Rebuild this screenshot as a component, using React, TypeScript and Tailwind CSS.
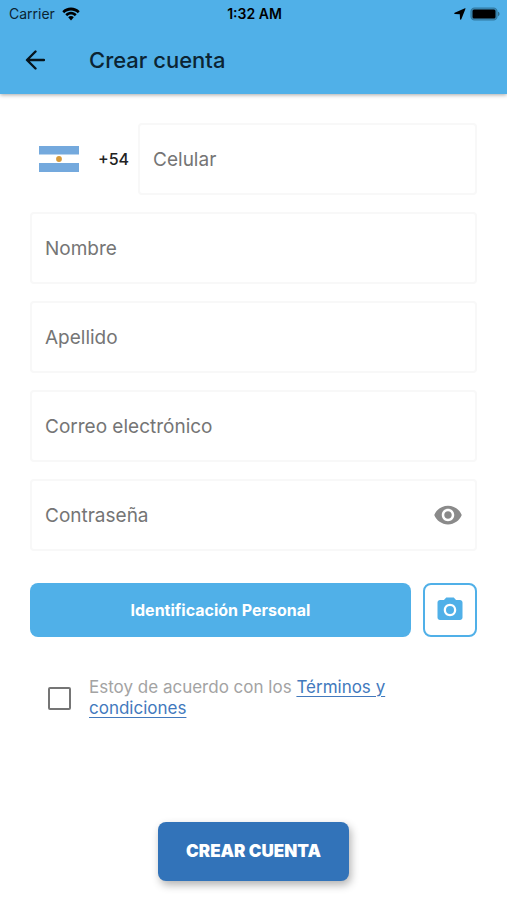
import { useState } from "react"
import { MdPhotoCamera, MdVisibility } from "react-icons/md"

const fieldClass =
  "block h-[72px] w-full min-w-0 rounded border-2 border-[#f8f8f8] bg-white px-[13px] text-[19px] text-gray-800 outline-none placeholder:text-[#757575] focus:border-[#50b0e8]"

function StatusBar() {
  return (
    <div className="grid h-7 grid-cols-3 items-center pr-[7px] pl-[9px] text-sm text-black">
      <div className="flex items-center gap-[7px] text-[#0b2433]">
        <span>Carrier</span>
        <svg className="h-[14px] w-[18px]" viewBox="0 0 18 14">
          <path
            d="M9 .6C5.7.6 2.6 1.9.3 4.2l1.9 2C4 4.4 6.4 3.4 9 3.4s5 1 6.8 2.800l1.900-2C15.400 1.900 12.300.6 9 .6z"
            fill="#000"
          />
          <path
            d="M9 4.8c-2.200 0-4.200.9-5.700 2.400l1.900 2C6.200 8.200 7.500 7.600 9 7.600s2.800.6 3.800 1.600l1.900-2C13.200 5.700 11.200 4.800 9 4.800z"
            fill="#000"
          />
          <path
            d="M9 9c-1.100 0-2.100.4-2.800 1.200L9 13.400l2.800-3.200C11.100 9.400 10.100 9 9 9z"
            fill="#000"
          />
        </svg>
      </div>
      <span className="text-center font-semibold">1:32 AM</span>
      <div className="flex items-center justify-end gap-1">
        <svg className="h-3 w-3" viewBox="0 0 12 12">
          <path
            d="M11.5.8 7.300 11.200c-.3.700-1.300.6-1.300-.3L5.800 6.300.9 6.100C.1 6 0 5.100.7 4.800L11 .3c.4-.2.7.1.5.5z"
            fill="#000"
          />
        </svg>
        <svg className="h-[14px] w-[30px]" viewBox="0 0 30 14">
          <rect
            x="1"
            y="1"
            width="26"
            height="12"
            rx="3.6"
            fill="#3f8ebd"
            stroke="#31799f"
            strokeWidth="1.2"
          />
          <rect x="2.5" y="2.5" width="23" height="9" rx="1.5" fill="#000" />
          <path d="M28 4.8c2 .6 2 3.800 0 4.400z" fill="#31708f" />
        </svg>
      </div>
    </div>
  )
}

function Flag() {
  return (
    <svg className="h-[26px] w-10" viewBox="0 0 40 26" aria-label="Argentina">
      <rect width="40" height="26" fill="#fff" />
      <rect width="40" height="8.5" fill="#74a9dd" />
      <rect y="17" width="40" height="9" fill="#74a9dd" />
      <circle cx="20" cy="13" r="2.9" fill="#d79a3a" />
    </svg>
  )
}

export default function App() {
  const [showPassword, setShowPassword] = useState(false)

  return (
    <div className="min-h-screen bg-white font-['Inter',sans-serif]">
      <header className="bg-[#50b0e8] shadow-[0_1px_4px_rgba(0,0,0,0.35)]">
        <StatusBar />
        <div className="flex h-[66px] items-center gap-11 px-[25px] pb-0.5">
          <button type="button" aria-label="Volver">
            <svg
              className="h-5 w-5"
              viewBox="0 0 20 20"
              fill="none"
              stroke="#06141c"
              strokeWidth="2.4"
              strokeLinecap="round"
              strokeLinejoin="round"
            >
              <path d="M19 10H2.500M10.500 1.500 2 10l8.500 8.500" />
            </svg>
          </button>
          <h1 className="text-[22px] font-medium text-[#0b2433]">
            Crear cuenta
          </h1>
        </div>
      </header>

      <form
        className="px-[30px] pt-[29px] pb-5"
        onSubmit={(e) => e.preventDefault()}
      >
        <div className="flex flex-col gap-[17px]">
          <div className="flex items-center">
            <button
              type="button"
              className="flex shrink-0 items-center gap-[19px] px-[9px] text-base font-medium text-[#222]"
            >
              <Flag />
              +54
            </button>
            <input
              type="tel"
              aria-label="Celular"
              placeholder="Celular"
              className={fieldClass}
            />
          </div>
          <input
            type="text"
            aria-label="Nombre"
            placeholder="Nombre"
            className={fieldClass}
          />
          <input
            type="text"
            aria-label="Apellido"
            placeholder="Apellido"
            className={fieldClass}
          />
          <input
            type="email"
            aria-label="Correo electrónico"
            placeholder="Correo electrónico"
            className={fieldClass}
          />
          <div className="flex h-[72px] items-center rounded border-2 border-[#f8f8f8] bg-white pr-3 pl-[13px]">
            <input
              type={showPassword ? "text" : "password"}
              aria-label="Contraseña"
              placeholder="Contraseña"
              className="h-full min-w-0 flex-1 text-[19px] text-gray-800 outline-none placeholder:text-[#757575]"
            />
            <button
              type="button"
              aria-label="Mostrar contraseña"
              onClick={() => setShowPassword(!showPassword)}
            >
              <MdVisibility className="h-[30px] w-[30px] text-[#8a8a8a]" />
            </button>
          </div>
        </div>

        <div className="mt-8 flex gap-3">
          <button
            type="button"
            className="h-[54px] flex-1 rounded-lg bg-[#50b0e8] text-base font-bold text-white"
          >
            Identificación Personal
          </button>
          <button
            type="button"
            aria-label="Tomar foto"
            className="flex h-[54px] w-[54px] items-center justify-center rounded-lg border-2 border-[#50b0e8]"
          >
            <MdPhotoCamera className="h-[30px] w-[30px] text-[#50b0e8]" />
          </button>
        </div>

        <div className="mt-10 flex items-center gap-[18px] pl-[18px]">
          <input
            id="terms"
            type="checkbox"
            className="h-[23px] w-[23px] shrink-0 appearance-none rounded-xs border-2 border-[#757575] bg-white checked:bg-[#50b0e8]"
          />
          <label
            htmlFor="terms"
            className="max-w-[310px] text-[17px] leading-[21px] text-[#a3a3a3]"
          >
            Estoy de acuerdo con los{" "}
            <a
              href="#terminos"
              className="text-[#4279bd] underline underline-offset-3"
            >
              Términos y condiciones
            </a>
          </label>
        </div>

        <div className="mt-[103px] flex justify-center">
          <button
            type="submit"
            className="h-[59px] rounded-lg bg-[#3273b9] px-7 text-[17px] font-black text-white shadow-[2px_4px_8px_rgba(0,0,0,0.3)]"
          >
            CREAR CUENTA
          </button>
        </div>
      </form>
    </div>
  )
}
